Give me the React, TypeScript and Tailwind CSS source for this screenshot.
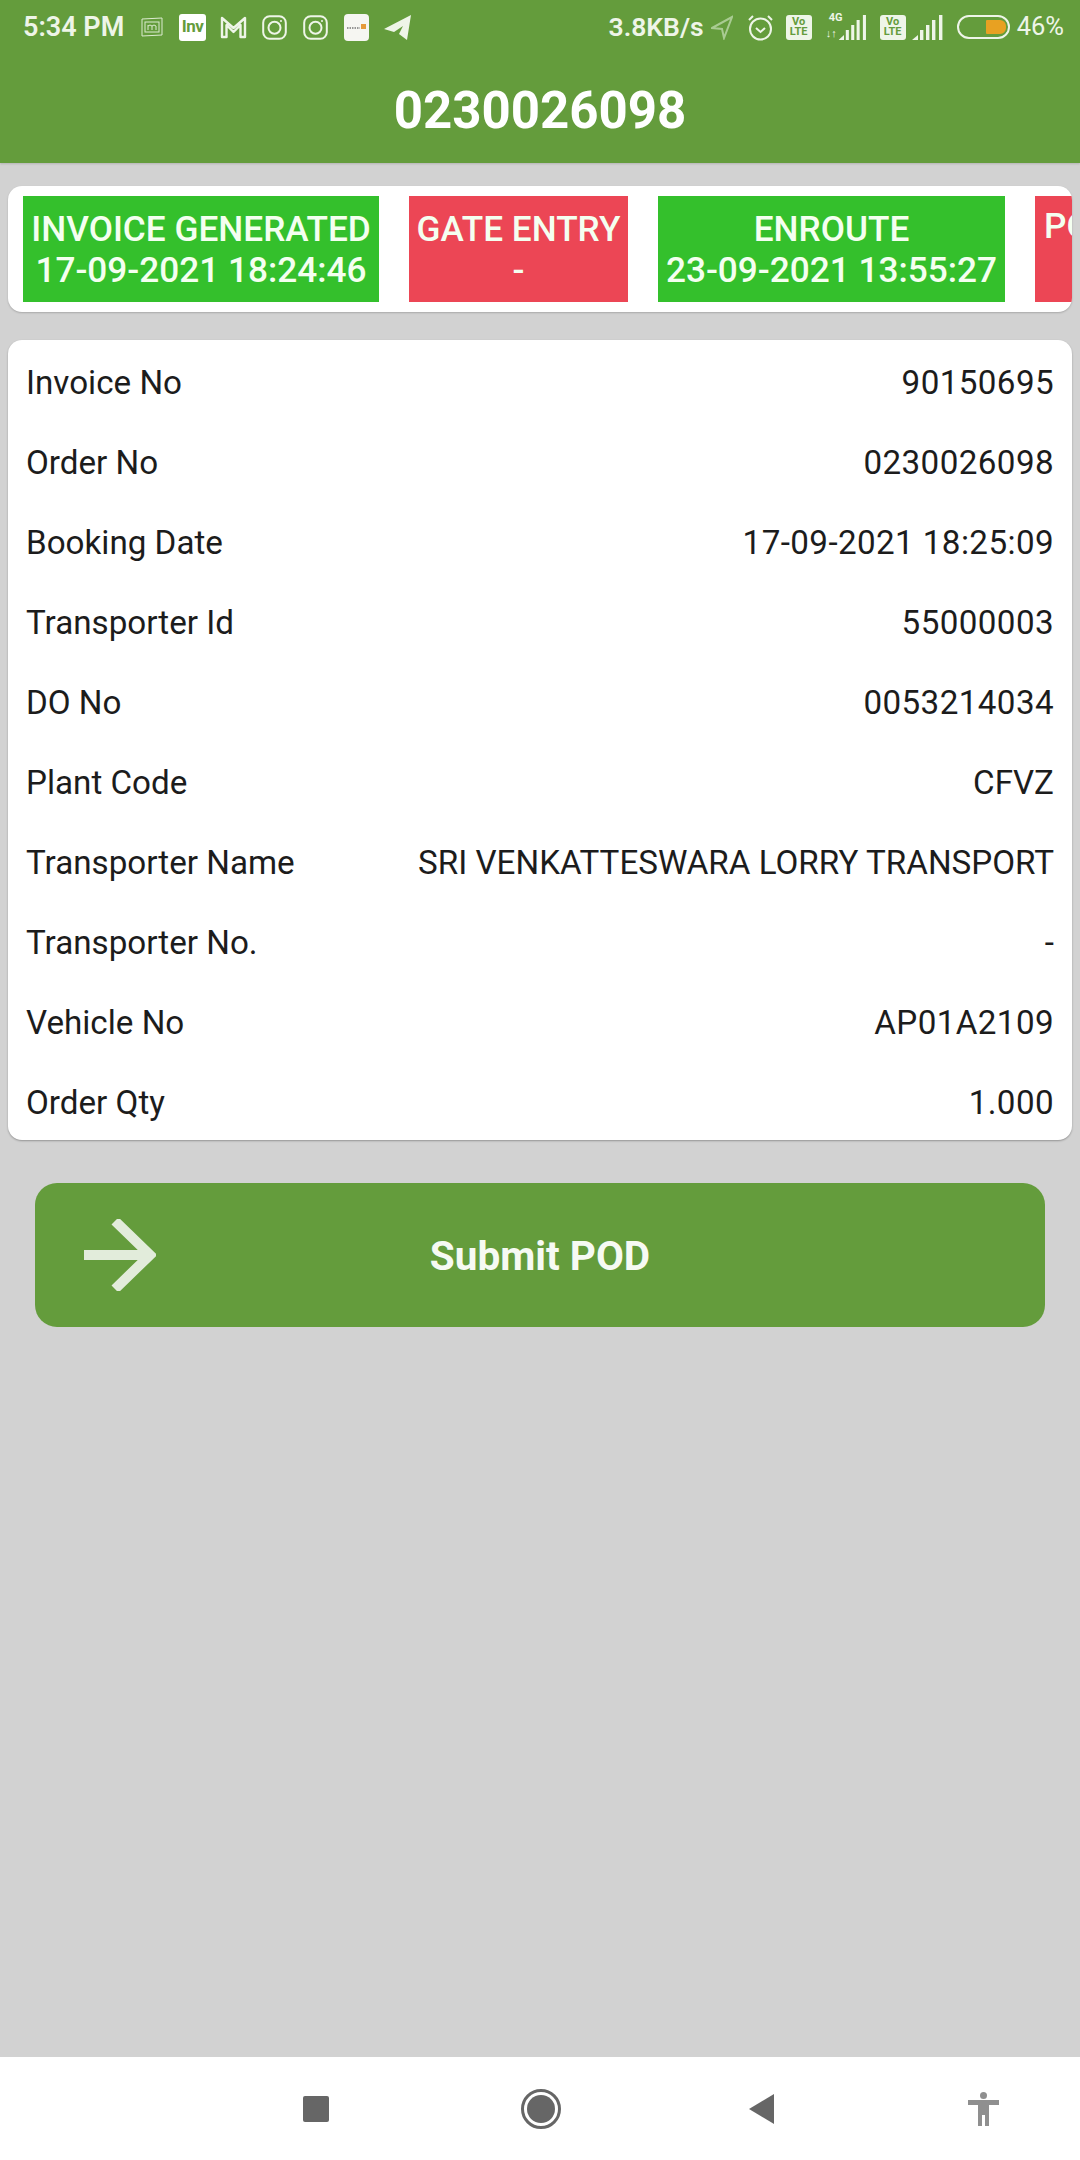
const rows: [string, string][] = [
  ["Invoice No", "90150695"],
  ["Order No", "0230026098"],
  ["Booking Date", "17-09-2021 18:25:09"],
  ["Transporter Id", "55000003"],
  ["DO No", "0053214034"],
  ["Plant Code", "CFVZ"],
  ["Transporter Name", "SRI VENKATTESWARA LORRY TRANSPORT"],
  ["Transporter No.", "-"],
  ["Vehicle No", "AP01A2109"],
  ["Order Qty", "1.000"],
]

const Insta = () => (
  <svg width="25" height="25" viewBox="0 0 25 25" fill="none" stroke="#eef5e8" strokeWidth="2">
    <rect x="1.2" y="1.2" width="22.6" height="22.6" rx="6.5" />
    <circle cx="12.5" cy="12.8" r="6" />
    <circle cx="19" cy="6" r="1" fill="#eef5e8" stroke="none" />
  </svg>
)

const VoLte = () => (
  <div className="flex h-[25px] w-[26px] flex-col items-center justify-center rounded-[3px] bg-[#eef5e8] text-[11px] leading-[10.5px] font-bold text-[#649c3c]">
    <span>Vo</span>
    <span>LTE</span>
  </div>
)

const Bars = () => (
  <svg width="32" height="25" viewBox="0 0 32 25" fill="#eef5e8">
    <path d="M0 25 L6 20 V25 Z" />
    <rect x="8" y="15" width="3.4" height="10" />
    <rect x="14" y="10" width="3.4" height="15" />
    <rect x="20" y="5" width="3.4" height="20" />
    <rect x="27" y="0" width="3.4" height="25" />
  </svg>
)

function StatusBar() {
  return (
    <div className="flex h-[54px] items-center pr-[16px] pl-[23px] text-[#eef5e8]">
      <span className="w-[118px] text-[27px] leading-none font-semibold">5:34 PM</span>
      <svg width="22" height="20" viewBox="0 0 22 20" fill="none" stroke="#dcebd0" strokeWidth="1">
        <path d="M1 2 L21 1 V18 L1 19 Z" />
        <rect x="4" y="5" width="14" height="10" />
        <path d="M7 13 V8 M7 9 Q9 7 11 9 V13 M11 9 Q13 7 15 9 V13" />
      </svg>
      <div className="ml-[16px] flex h-[27px] w-[27px] items-center justify-center rounded-[3px] bg-white text-[17px] font-bold tracking-[-0.5px] text-[#649c3c]">
        Inv
      </div>
      <svg className="ml-[14px]" width="27" height="24" viewBox="0 0 27 24" fill="none" stroke="#eef5e8" strokeWidth="2.4" strokeLinejoin="round">
        <path d="M2 22 V3 L13.5 13 L25 3 V22 H20.5 V10 L13.5 17 L6.5 10 V22 Z" />
      </svg>
      <div className="ml-[15px]"><Insta /></div>
      <div className="ml-[16px]"><Insta /></div>
      <div className="ml-[16px] flex h-[27px] w-[25px] items-center justify-center rounded-[4px] bg-[#f6f6f2]">
        <svg width="21" height="8" viewBox="0 0 21 8">
          <path d="M1 5 H14" stroke="#777" strokeWidth="1.4" strokeDasharray="1.5 1" />
          <rect x="15" y="1" width="5" height="5" fill="#e59a3a" />
        </svg>
      </div>
      <svg className="ml-[15px]" width="27" height="25" viewBox="0 0 27 25" fill="#eef5e8">
        <path d="M0 14 L27 0 L23 25 L15 19 L19 11 L10 17 Z" />
      </svg>

      <span className="ml-auto text-[26.5px] leading-none font-semibold">3.8KB/s</span>
      <svg className="ml-[7px]" width="22" height="25" viewBox="0 0 22 25" fill="none" stroke="#a9cb92" strokeWidth="2">
        <path d="M1 13 L21 2 L13 23 L11 14 Z" />
      </svg>
      <svg className="ml-[14px]" width="27" height="28" viewBox="0 0 27 28" fill="none" stroke="#eef5e8" strokeWidth="2">
        <circle cx="13.5" cy="16" r="10.5" />
        <path d="M9 15 L13.5 19 L18 15 M2 7 L6 3 M25 7 L21 3" />
      </svg>
      <div className="ml-[12px]"><VoLte /></div>
      <div className="relative ml-[14px] h-[26px] w-[43px]">
        <span className="absolute top-[-2px] left-[3px] text-[11px] leading-[12px] font-bold">4G</span>
        <span className="absolute bottom-[0px] left-[0px] text-[11px] leading-[12px] font-bold">↓↑</span>
        <div className="absolute right-0 bottom-0 scale-x-[0.9]"><Bars /></div>
      </div>
      <div className="ml-[11px]"><VoLte /></div>
      <div className="ml-[6px]"><Bars /></div>
      <div className="ml-[13px] flex h-[24px] w-[53px] items-center justify-end rounded-full border-2 border-[#eef5e8] pr-[2px]">
        <div className="h-[14px] w-[20px] rounded-r-[6px] rounded-l-[1px] bg-[#e8a122]" />
      </div>
      <span className="ml-[7px] text-[25.5px] leading-none">46%</span>
    </div>
  )
}

function Chip({ title, date, ok, width }: { title: string; date: string; ok?: boolean; width: string }) {
  return (
    <div
      className={
        "flex h-[106px] shrink-0 flex-col items-center justify-center pt-[2px] text-center text-[35.2px] leading-[41px] font-medium text-[#f4fff0] " +
        width +
        " " +
        (ok ? "bg-[#34c02c]" : "bg-[#ec4655]")
      }
    >
      <span>{title}</span>
      <span>{date}</span>
    </div>
  )
}

export default function App() {
  return (
    <div className="flex h-[2160px] w-[1080px] flex-col overflow-hidden bg-[#d2d2d2] font-['Roboto',sans-serif]">
      <header className="h-[163px] bg-[#649c3c] shadow-[0_1px_2px_rgba(0,0,0,0.15)]">
        <StatusBar />
        <h1 className="pt-[30px] text-center text-[51px] leading-[54px] font-bold text-white">0230026098</h1>
      </header>

      <main className="flex flex-1 flex-col px-[8px] pt-[23px]">
        <div className="flex h-[126px] items-center gap-[30px] overflow-hidden rounded-[14px] bg-white pl-[15px] shadow-[0_1px_2px_rgba(0,0,0,0.2)]">
          <Chip ok width="w-[356px]" title="INVOICE GENERATED" date="17-09-2021 18:24:46" />
          <Chip width="w-[219px]" title="GATE ENTRY" date="-" />
          <Chip ok width="w-[347px]" title="ENROUTE" date="23-09-2021 13:55:27" />
          <div className="flex h-[106px] w-[120px] shrink-0 flex-col bg-[#ec4655] pt-[10px] pl-[9px] text-[35.2px] leading-[41px] font-medium text-[#f4fff0]">
            <span>POD</span>
          </div>
        </div>

        <div className="mt-[28px] flex flex-col rounded-[14px] bg-white px-[18px] shadow-[0_1px_2px_rgba(0,0,0,0.3)]">
          {rows.map(([label, value]) => (
            <div key={label} className="flex h-[80px] items-center justify-between pt-[5px] text-[33.2px] text-[#1c1c1c]">
              <span>{label}</span>
              <span className={/\d/.test(value) ? "tracking-[0.4px]" : ""}>{value}</span>
            </div>
          ))}
        </div>

        <button className="mx-[27px] mt-[43px] flex h-[144px] items-center rounded-[22px] bg-[#649c3c]">
          <svg className="ml-[49px]" width="72" height="72" viewBox="0 0 72 72" fill="none" stroke="#e2ecdb" strokeWidth="10" strokeLinejoin="miter">
            <path d="M0 36 H68 M31 2 L66 36 L31 70" />
          </svg>
          <span className="ml-[-121px] w-full pt-[2px] text-center text-[40.5px] font-bold text-[#f6faf3]">Submit POD</span>
        </button>
      </main>

      <nav className="relative flex h-[103px] items-center bg-white">
        <div className="ml-[303px] h-[26px] w-[26px] rounded-[2px] bg-[#666666]" />
        <div className="ml-[192px] flex h-[40px] w-[40px] items-center justify-center rounded-full border-[3px] border-[#666666]">
          <div className="h-[28px] w-[28px] rounded-full bg-[#666666]" />
        </div>
        <svg className="ml-[188px]" width="25" height="30" viewBox="0 0 25 30" fill="#666666">
          <path d="M25 0 V30 L0 15 Z" />
        </svg>
        <svg className="ml-[194px]" width="31" height="34" viewBox="0 0 31 34" fill="#8f8f8f">
          <circle cx="15.5" cy="3.5" r="3.5" />
          <path d="M0 8 H31 V13 H21 V34 H17 V23 H14 V34 H10 V13 H0 Z" />
        </svg>
      </nav>
    </div>
  )
}
